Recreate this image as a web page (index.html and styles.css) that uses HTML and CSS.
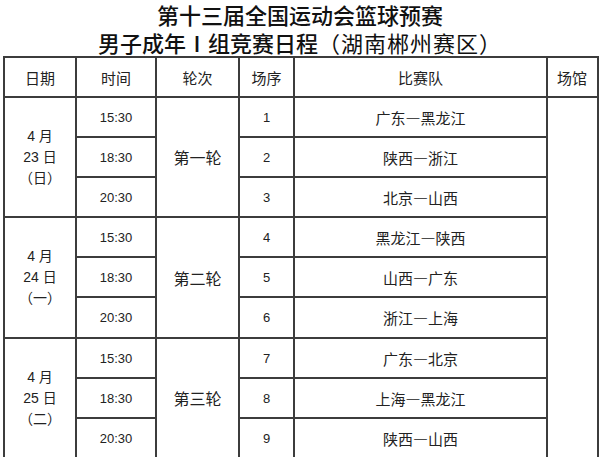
FILE: index.html
```html
<!DOCTYPE html>
<html lang="zh-CN">
<head>
<meta charset="utf-8">
<link rel="stylesheet" href="styles.css">
</head>
<body>
<div class="title">
  <div class="t1">第十三届全国运动会篮球预赛</div>
  <div class="t2">男子成年Ⅰ组竞赛日程<span class="region">（湖南郴州赛区）</span></div>
</div>
<table class="sched">
  <colgroup>
    <col class="c-date"><col class="c-time"><col class="c-round"><col class="c-no"><col class="c-team"><col class="c-venue">
  </colgroup>
  <thead>
    <tr><th>日期</th><th>时间</th><th>轮次</th><th>场序</th><th>比赛队</th><th class="venue-h">场馆</th></tr>
  </thead>
  <tbody>
    <tr>
      <td rowspan="3" class="date">4 月<br>23 日<br>（日）</td>
      <td class="num">15:30</td>
      <td rowspan="3" class="round">第一轮</td>
      <td class="num">1</td>
      <td class="team">广东—黑龙江</td>
      <td rowspan="9" class="venue"></td>
    </tr>
    <tr><td class="num">18:30</td><td class="num">2</td><td class="team">陕西—浙江</td></tr>
    <tr><td class="num">20:30</td><td class="num">3</td><td class="team">北京—山西</td></tr>
    <tr>
      <td rowspan="3" class="date">4 月<br>24 日<br>（一）</td>
      <td class="num">15:30</td>
      <td rowspan="3" class="round">第二轮</td>
      <td class="num">4</td>
      <td class="team">黑龙江—陕西</td>
    </tr>
    <tr><td class="num">18:30</td><td class="num">5</td><td class="team">山西—广东</td></tr>
    <tr class="tall"><td class="num">20:30</td><td class="num">6</td><td class="team">浙江—上海</td></tr>
    <tr>
      <td rowspan="3" class="date">4 月<br>25 日<br>（二）</td>
      <td class="num">15:30</td>
      <td rowspan="3" class="round">第三轮</td>
      <td class="num">7</td>
      <td class="team">广东—北京</td>
    </tr>
    <tr><td class="num">18:30</td><td class="num">8</td><td class="team">上海—黑龙江</td></tr>
    <tr><td class="num">20:30</td><td class="num">9</td><td class="team">陕西—山西</td></tr>
  </tbody>
</table>
</body>
</html>
```

FILE: styles.css
```css
html, body {
  margin: 0;
  padding: 0;
  background: #fff;
  overflow: hidden;
}
body {
  width: 600px;
  height: 457px;
  font-family: "Liberation Sans", "Noto Sans CJK SC", sans-serif;
  color: #222;
}
.title {
  text-align: center;
  font-family: "Noto Sans CJK SC", sans-serif;
  font-size: 22px;
  line-height: 28px;
  font-weight: 500;
  color: #111;
  height: 56px;
  padding-top: 0;
}
.t2 .region {
  font-weight: 400;
  letter-spacing: 1px;
}
.sched {
  border-collapse: collapse;
  table-layout: fixed;
  width: 594px;
  margin-left: 3px;
}
.c-date { width: 72px; }
.c-time { width: 80px; }
.c-round { width: 83px; }
.c-no { width: 55px; }
.c-team { width: 253px; }
.c-venue { width: 51px; }
.sched th, .sched td {
  border: 2px solid #3c3c3c;
  padding: 0;
  height: 38px;
  text-align: center;
  vertical-align: middle;
  font-weight: 400;
}
.sched .tall td {
  height: 39px;
}
.sched th {
  font-size: 15px;
  font-family: "Noto Sans CJK SC", sans-serif;
}
.sched .venue-h {
  text-align: right;
  padding-right: 10px;
}
.num {
  font-size: 13px;
}
.team {
  font-size: 15px;
  font-family: "Noto Sans CJK SC", sans-serif;
}
.round {
  font-size: 16px;
  font-family: "Noto Sans CJK SC", sans-serif;
}
.date {
  font-size: 14px;
  line-height: 21px;
}
```
